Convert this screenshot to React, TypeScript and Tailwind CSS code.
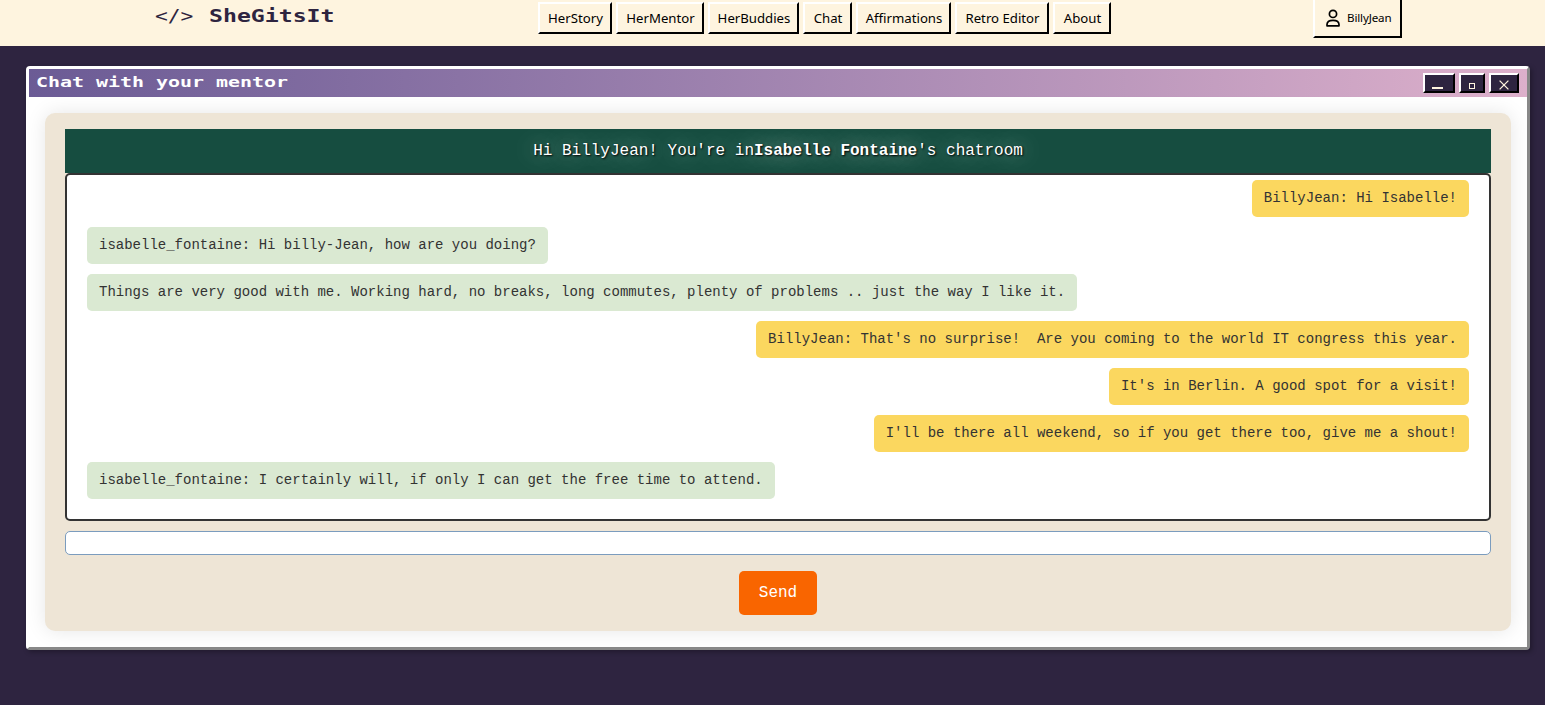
import type { ReactNode } from "react";

const navItems = [
  { label: "HerStory", width: "w-[74px]" },
  { label: "HerMentor", width: "w-[88px]" },
  { label: "HerBuddies", width: "w-[91px]" },
  { label: "Chat", width: "w-[49px]" },
  { label: "Affirmations", width: "w-[95px]" },
  { label: "Retro Editor", width: "w-[94px]" },
  { label: "About", width: "w-[58px]" },
];

const messages = [
  { mine: true, text: "BillyJean: Hi Isabelle!" },
  { mine: false, text: "isabelle_fontaine: Hi billy-Jean, how are you doing?" },
  {
    mine: false,
    text: "Things are very good with me. Working hard, no breaks, long commutes, plenty of problems .. just the way I like it.",
  },
  {
    mine: true,
    text: "BillyJean: That's no surprise!  Are you coming to the world IT congress this year.",
  },
  { mine: true, text: "It's in Berlin. A good spot for a visit!" },
  { mine: true, text: "I'll be there all weekend, so if you get there too, give me a shout!" },
  {
    mine: false,
    text: "isabelle_fontaine: I certainly will, if only I can get the free time to attend.",
  },
];

function Header() {
  return (
    <header className="flex h-[46px] shrink-0 items-start bg-[#fef4df] font-['Noto_Sans',sans-serif] text-black">
      <div className="ml-[155px] flex h-8 w-[383px] pt-1 font-['DejaVu_Sans_Mono',monospace] text-[17px] leading-6 whitespace-pre text-[#2e2440]">
        <span className="w-[54px]">
          <span className="inline-block origin-left scale-x-[1.25]">{"</>"}</span>
        </span>
        <span className="inline-block origin-left scale-x-[1.362] font-bold">SheGitsIt</span>
      </div>
      <nav className="flex gap-1 pt-0.5">
        {navItems.map((item) => (
          <button
            key={item.label}
            className={`${item.width} h-8 border-2 border-t-white border-r-black border-b-black border-l-white pl-px text-center text-[13.2px] leading-7 whitespace-nowrap`}
          >
            {item.label}
          </button>
        ))}
      </nav>
      <button className="ml-[202px] flex h-[38px] w-[89px] items-center border-2 border-t-0 border-r-black border-b-black border-l-white pl-[11px] text-[11.6px] tracking-[-0.15px]">
        <svg
          className="mr-[7px] h-[18px] w-[14px]"
          viewBox="0 0 14 18"
          fill="none"
          stroke="black"
          strokeWidth="1.7"
          strokeLinejoin="round"
        >
          <circle cx="7" cy="4.9" r="3.6" />
          <path d="M1 16.8v-1.2c0-2.7 2.4-4.3 6-4.3s6 1.6 6 4.3v1.2Z" />
        </svg>
        <span>BillyJean</span>
      </button>
    </header>
  );
}

function WindowButton({ width, label, children }: { width: string; label: string; children: ReactNode }) {
  return (
    <button
      aria-label={label}
      className={`${width} flex h-5 items-end justify-center border-2 border-t-white border-r-black border-b-black border-l-white bg-[#2e2440]`}
    >
      {children}
    </button>
  );
}

function TitleBar() {
  return (
    <div className="flex h-7 items-center bg-linear-to-r from-[#6b5b95] to-[#ddb0cb] pr-2 pl-[7px]">
      <h1 className="-mt-0.5 flex-1 font-['DejaVu_Sans_Mono',monospace] text-[14px] font-bold whitespace-pre text-white">
        <span className="inline-block origin-left scale-x-[1.424]">Chat with your mentor</span>
      </h1>
      <div className="flex gap-1">
        <WindowButton width="w-8" label="Minimize">
          <span className="mr-[3px] mb-0.5 h-0.5 w-[11px] bg-[#fef4df]" />
        </WindowButton>
        <WindowButton width="w-[26px]" label="Maximize">
          <span className="mb-0.5 h-1.5 w-1.5 border border-[#fef4df]" />
        </WindowButton>
        <WindowButton width="w-[30px]" label="Close">
          <svg className="mb-[1.5px] h-[10px] w-[10px]" viewBox="0 0 10 10" stroke="#fef4df" strokeWidth="1.3">
            <path d="M.6 .6 9.4 9.4M9.4 .6.6 9.4" />
          </svg>
        </WindowButton>
      </div>
    </div>
  );
}

function ChatRoom() {
  return (
    <section className="flex h-[518px] flex-col rounded-[10px] bg-[#eee5d6] px-5 pt-4 font-['Liberation_Mono',monospace] shadow-[0_0_20px_rgba(0,0,0,0.1)]">
      <h2 className="h-11 overflow-hidden bg-[#164d40] text-center text-base leading-[44px] font-normal whitespace-pre text-white">
        <span className="[text-shadow:1px_1px_2px_#000,0_0_25px_rgba(255,255,255,0.5),0_0_25px_rgba(255,255,255,0.3)]">
          {"Hi BillyJean! You're in"}
          <strong className="font-bold">Isabelle Fontaine</strong>
          {"'s chatroom"}
        </span>
      </h2>
      <div className="flex h-[348px] flex-col gap-[10px] rounded-[5px] border-2 border-[#333] bg-white px-5 pt-[5px]">
        {messages.map((message) => (
          <p
            key={message.text}
            className={`${
              message.mine ? "self-end bg-[#fbd75f]" : "self-start bg-[#dae9d2]"
            } h-[37px] rounded-[5px] px-3 text-sm leading-[37px] whitespace-pre text-[#333]`}
          >
            {message.text}
          </p>
        ))}
      </div>
      <input
        aria-label="Message"
        className="mt-[10px] h-6 w-full rounded-[5px] border border-[#7b9cbe] bg-white px-2 text-sm outline-none"
      />
      <button className="mt-4 h-11 w-[78px] self-center rounded-[5px] bg-[#f96500] text-base text-white">
        Send
      </button>
    </section>
  );
}

export default function App() {
  return (
    <div className="flex h-[705px] w-full flex-col overflow-hidden bg-[#2e2440]">
      <Header />
      <main className="mt-5 mr-[15px] ml-[26px] h-[584px] rounded-[4px] border-[3px] border-t-white border-r-[#888] border-b-[#888] border-l-white bg-white shadow-[2px_2px_5px_rgba(0,0,0,0.3)]">
        <TitleBar />
        <div className="p-4">
          <ChatRoom />
        </div>
      </main>
    </div>
  );
}
